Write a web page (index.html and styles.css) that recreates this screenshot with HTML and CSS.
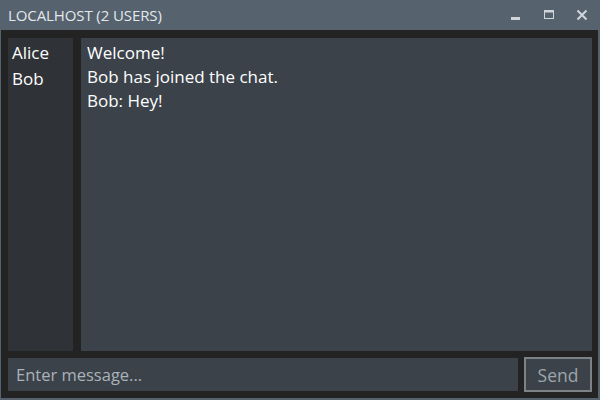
FILE: index.html
```html
<!DOCTYPE html>
<html>
<head>
<meta charset="utf-8">
<link rel="stylesheet" href="styles.css">
</head>
<body>
<div class="window">
  <div class="titlebar">
    <span class="title">LOCALHOST (2 USERS)</span>
    <div class="controls">
      <span class="ctl"><svg width="12" height="12" viewBox="0 0 12 12"><rect x="1" y="8" width="9" height="3" fill="#d0d5da"/></svg></span>
      <span class="ctl"><svg width="12" height="12" viewBox="0 0 12 12"><rect x="1.5" y="1.5" width="9" height="8" fill="none" stroke="#d0d5da" stroke-width="1"/><rect x="1" y="1" width="10" height="2.5" fill="#d0d5da"/></svg></span>
      <span class="ctl"><svg width="12" height="12" viewBox="0 0 12 12"><path d="M1.5 1.5 L10.5 10.5 M10.5 1.5 L1.5 10.5" stroke="#d0d5da" stroke-width="2"/></svg></span>
    </div>
  </div>
  <div class="content">
    <div class="main">
      <ul class="users">
        <li>Alice</li>
        <li>Bob</li>
      </ul>
      <div class="messages">
        <div class="msg">Welcome!</div>
        <div class="msg">Bob has joined the chat.</div>
        <div class="msg">Bob: Hey!</div>
      </div>
    </div>
    <div class="inputrow">
      <div class="input">Enter message...</div>
      <div class="send">Send</div>
    </div>
  </div>
</div>
</body>
</html>
```
FILE: styles.css
```css
html, body {
  margin: 0;
  padding: 0;
  width: 600px;
  height: 400px;
  overflow: hidden;
}
body {
  font-family: "Open Sans", "Noto Sans", sans-serif;
  background: #56626e;
}
.window {
  width: 600px;
  height: 400px;
  box-sizing: border-box;
  display: flex;
  flex-direction: column;
  padding: 0 2px 2px 1px;
  background: #56626e;
}
.titlebar {
  height: 30px;
  display: flex;
  align-items: center;
  justify-content: space-between;
  padding-left: 7px;
  flex: none;
}
.title {
  color: #e3e8ec;
  font-size: 15px;
  letter-spacing: -0.1px;
}
.controls {
  display: flex;
  height: 30px;
}
.ctl {
  width: 33px;
  display: flex;
  align-items: center;
  justify-content: center;
}
.content {
  flex: 1;
  background: #232323;
  display: flex;
  flex-direction: column;
  padding: 8px 6px 6px 7px;
  gap: 6px;
}
.main {
  flex: 1;
  display: flex;
  gap: 8px;
}
.users {
  list-style: none;
  margin: 0;
  padding: 2px 0 0 4px;
  width: 61px;
  background: #2f3337;
  color: #ffffff;
  font-size: 17px;
}
.users li {
  line-height: 26px;
}
.messages {
  flex: 1;
  background: #3b4249;
  padding: 3px 0 0 6px;
  color: #ffffff;
  font-size: 17px;
}
.msg {
  line-height: 24px;
}
.inputrow {
  height: 35px;
  display: flex;
  gap: 6px;
  align-items: center;
}
.input {
  flex: 1;
  height: 33px;
  background: #3b4249;
  color: #aab2ba;
  font-size: 16.5px;
  line-height: 33px;
  padding-left: 8px;
}
.send {
  width: 64px;
  height: 31px;
  border: 2px solid #7d8287;
  background: #3b4249;
  color: #9ea5ac;
  font-size: 17.5px;
  font-weight: 500;
  display: flex;
  align-items: center;
  justify-content: center;
}
```
